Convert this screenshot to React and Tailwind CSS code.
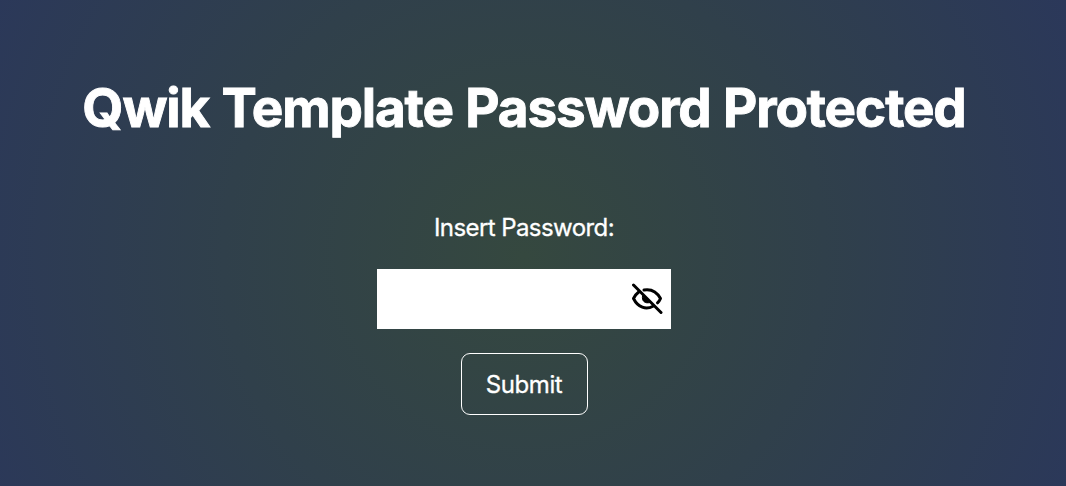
export default function App() {
  return (
    <main className="flex h-[486px] w-full flex-col items-center overflow-hidden bg-[radial-gradient(circle_at_524px_256px,#35483f_0%,#30404b_50%,#2b385a_100%)] pr-[18px] pt-[76px] font-['Inter',sans-serif] text-white">
      <h1 className="whitespace-nowrap text-[53px] font-bold leading-[64px] tracking-[-1.12px] [-webkit-text-stroke:0.9px_white] [word-spacing:1px]">Qwik Template Password Protected</h1>
      <label className="mt-[72px] text-[24px] leading-[32px] tracking-[-0.58px] [-webkit-text-stroke:0.3px_white]" htmlFor="pw">Insert Password:</label>
      <div className="mt-[25px] flex h-[60px] w-[294px] items-center bg-white pr-2">
        <input id="pw" type="password" className="h-full min-w-0 flex-1 outline-none" />
        <svg className="h-8 w-8 text-black" viewBox="0 0 32 32" fill="none" stroke="currentColor" strokeWidth="3" strokeLinecap="round" strokeLinejoin="round">
          <path d="M13 6.900C21 5.600 26 9 29.500 15.500Q28.500 18 26.500 19.800M8 8.800Q4.500 11.500 2.500 15.500C7 24.500 15 27 22 23.200" />
          <path d="M11.500 13C10.500 18 14 21 19 19.500Z" fill="currentColor" strokeWidth="1" />
          <path d="M2.500 2L30 29.500" />
        </svg>
      </div>
      <button className="mt-6 h-[62px] w-[127px] rounded-[9px] border border-white pt-0.5 text-[24px] tracking-[-0.4px] [-webkit-text-stroke:0.3px_white]">Submit</button>
    </main>
  );
}
